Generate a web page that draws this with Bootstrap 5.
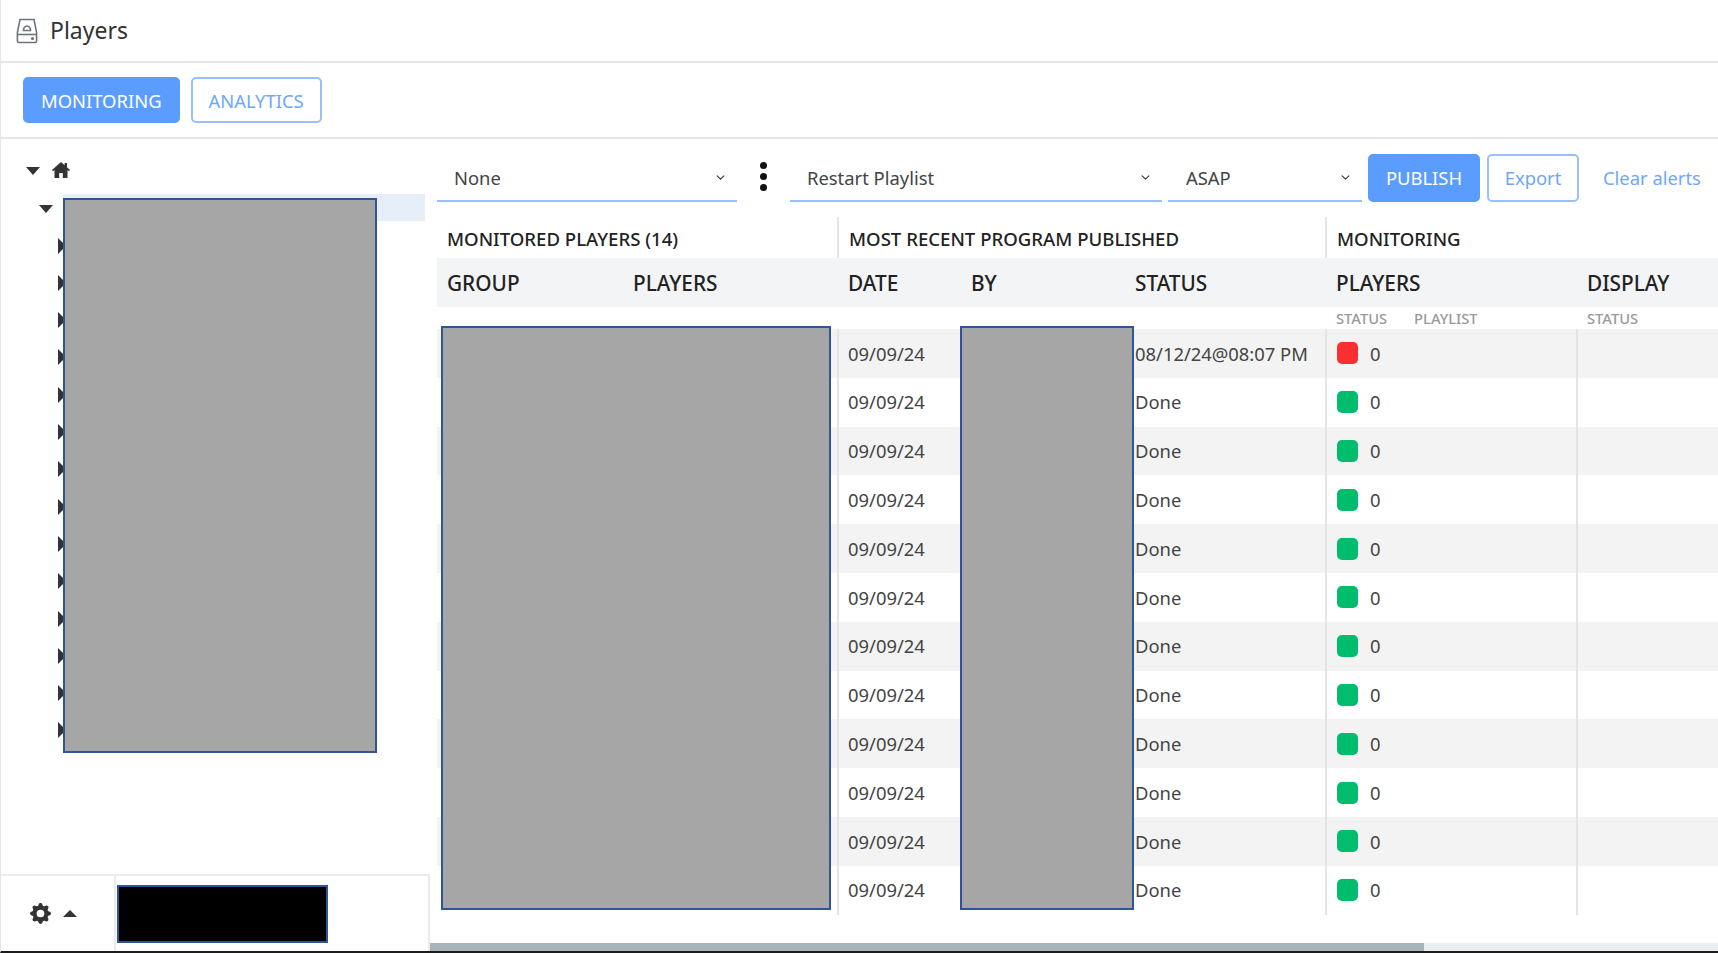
<!DOCTYPE html>
<html lang="en">
<head>
<meta charset="utf-8">
<title>Players</title>
<link href="https://cdn.jsdelivr.net/npm/bootstrap@5.3.0/dist/css/bootstrap.min.css" rel="stylesheet">
<style>
html,body{height:953px;overflow:hidden;background:#fff}
body{font-family:"Noto Sans","Open Sans",sans-serif;color:#444;font-size:18.4px}
.app-shell{height:953px;border-left:1px solid #e4e6e8;border-bottom:2px solid #1c1c1c}
.title-bar{height:63px;padding-left:15px;border-bottom:2px solid #e6e6e6;gap:12px;color:#333;font-size:23px;flex:none}
.tab-bar{height:76px;padding:14px 0 0 22px;border-bottom:2px solid #e6e6e6;gap:11px;flex:none}
.act-btn{--bs-btn-border-radius:5px;font-size:18.4px;height:47px;padding:0 17px;display:flex;align-items:center}
.tab-btn{height:46px;padding:2px 16px 0}
.act-solid{background:#5b9dff;border:2px solid #5b9dff;color:#fff}
.act-line{background:#fff;border:2px solid #98c0fb;color:#6ea8fe}
.work-area{min-height:0}
.side-col{width:429px;flex:none}
.tree-area{padding-top:13px;min-height:0}
.tree-row{height:37.3px;position:relative}
.tri-down{position:absolute;width:0;height:0;border-left:7px solid transparent;border-right:7px solid transparent;border-top:8px solid #333;top:15px}
.tri-second{left:38px;top:16px}
.tri-right{position:absolute;left:57px;top:11px;width:0;height:0;border-top:8px solid transparent;border-bottom:8px solid transparent;border-left:8px solid #333}
.tree-sel{position:absolute;left:62px;width:362px;top:5px;height:27px;background:#e6eef7}
.tree-home{position:absolute;left:51px;top:10px}
.mask-gray{position:absolute;background:#a6a6a6;border:2px solid #2f5597}
.mask-tree{left:62px;top:59px;width:314px;height:555px}
.side-foot{height:77px;flex:none;border-top:2px solid #e9ecef;border-right:2px solid #e9ecef}
.foot-tools{width:115px;border-right:2px solid #e9ecef;padding-left:29px;gap:12px}
.tri-up{width:0;height:0;border-left:7px solid transparent;border-right:7px solid transparent;border-bottom:7px solid #333}
.mask-black{width:211px;height:58px;background:#000;border:2px solid #2f5597;margin:9px 0 0 1px}
.main-col{min-width:0}
.tool-row{padding:15px 0 0 7px;height:78px;flex:none}
.pick-box{border:0;border-bottom:2px solid #98c0fb;border-radius:0;height:48px;font-size:18.4px;color:#444;padding:7px 36px 5px 17px;background-size:11px 9px;background-position:right 11px center;box-shadow:none}
.pick-a{width:300px}
.pick-b{width:372px;margin-left:53px}
.pick-c{width:194px;margin-left:6px;padding-left:18px}
.dots-col{width:0;position:relative}
.dots-mark{position:absolute;left:23px;top:8px;width:7px;display:flex;flex-direction:column;gap:4px}
.dots-mark span{width:7px;height:7px;border-radius:50%;background:#111}
.act-pub{margin-left:6px;width:112px;justify-content:center;height:48px}
.act-exp{margin-left:7px;width:92px;justify-content:center;height:48px}
.clear-link{margin-left:24px;color:#6ea8fe;text-decoration:none;white-space:nowrap;height:48px;display:flex;align-items:center}
.grid-wrap{position:relative;flex:1;min-height:0;overflow:hidden;padding-left:7px}
.mon-table{table-layout:fixed;width:1281px;margin:0;--bs-table-bg:transparent;border-collapse:collapse}
.mon-table td,.mon-table th{padding:0 0 0 10px;border:0;white-space:nowrap;vertical-align:middle;box-shadow:none}
.mon-table tr.sec-row th{height:41px;font-weight:500;font-size:18.6px;color:#222;padding-top:3px}
.mon-table tr.head-row th{height:49px;font-weight:500;font-size:20.8px;color:#222;background:#f3f4f6;padding-top:3px}
.mon-table tr.sub-row th{height:21px;font-weight:500;font-size:14.7px;color:#999;vertical-align:top;padding-top:0}
.mon-table tbody tr{height:48.8px}
.mon-table tbody td{color:#444;font-size:18.4px}
.mon-table tbody td.edge-l:nth-child(3){padding-left:9px}
.mon-table tbody tr:nth-child(odd) td{background:#f3f3f3}
.edge-l{border-left:2px solid #e4e4e4!important}
.mon-table tr.head-row th.edge-l{border-left:0!important}
.mon-table tr.sub-row th.edge-l{border-left:0!important}
.sq-st{width:21px;height:22px;border-radius:5px;display:inline-block;flex:none}
.sq-ok{background:#00bd6e}
.sq-bad{background:#fc2f30}
.st-cell{gap:12px}
.sub-gap{gap:27px}
.mask-a{left:11px;top:109px;width:390px;height:584px}
.mask-b{left:530px;top:109px;width:174px;height:584px}
.scroll-track{height:8px;flex:none;background:#e9eef2}
.scroll-thumb{width:994px;height:100%;background:#a8b4bb}
</style>
</head>
<body>
<div class="app-shell d-flex flex-column">
  <div class="title-bar d-flex align-items-center">
    <svg width="22" height="26" viewBox="0 0 22 26" fill="none" stroke="#6c757d" stroke-width="1.6"><path d="M4 1.5h14l2.6 13v8.5a1.5 1.5 0 0 1-1.5 1.5H2.9a1.5 1.5 0 0 1-1.5-1.5v-8.5z"/><path d="M1.4 16.5h19.2"/><path d="M7.5 12.5c-.3-2.600 1.700-4.500 3.500-4.500s3.800 1.900 3.500 4.500z"/><circle cx="16.500" cy="20.500" r=".8" fill="#6c757d"/></svg>
    <span>Players</span>
  </div>
  <div class="tab-bar d-flex align-items-start">
    <button type="button" class="btn act-btn tab-btn act-solid">MONITORING</button>
    <button type="button" class="btn act-btn tab-btn act-line">ANALYTICS</button>
  </div>
  <div class="work-area d-flex flex-grow-1">
    <aside class="side-col d-flex flex-column">
      <div class="tree-area flex-grow-1 position-relative">
        <div class="tree-row"><span class="tri-down" style="left:25px"></span>
          <svg class="tree-home" width="18" height="16" viewBox="0 0 18 16" fill="#333"><path d="M9 0 0 8l1 1.200 1.500-1.300V16h4.700v-5h3.600v5h4.700V7.900L17 9.200 18 8l-3-2.700V1h-2.400v2.200z"/></svg>
        </div>
        <div class="tree-row"><span class="tree-sel"></span><span class="tri-down tri-second"></span></div>
        <div class="tree-row"><span class="tri-right"></span></div>
        <div class="tree-row"><span class="tri-right"></span></div>
        <div class="tree-row"><span class="tri-right"></span></div>
        <div class="tree-row"><span class="tri-right"></span></div>
        <div class="tree-row"><span class="tri-right"></span></div>
        <div class="tree-row"><span class="tri-right"></span></div>
        <div class="tree-row"><span class="tri-right"></span></div>
        <div class="tree-row"><span class="tri-right"></span></div>
        <div class="tree-row"><span class="tri-right"></span></div>
        <div class="tree-row"><span class="tri-right"></span></div>
        <div class="tree-row"><span class="tri-right"></span></div>
        <div class="tree-row"><span class="tri-right"></span></div>
        <div class="tree-row"><span class="tri-right"></span></div>
        <div class="tree-row"><span class="tri-right"></span></div>
        <div class="mask-gray mask-tree"></div>
      </div>
      <div class="side-foot d-flex">
        <div class="foot-tools d-flex align-items-center">
          <svg width="21" height="21" viewBox="0 0 16 16" fill="#333"><path d="M9.405 1.050c-.413-1.400-2.397-1.400-2.810 0l-.1.340a1.464 1.464 0 0 1-2.105.872l-.31-.17c-1.283-.698-2.686.705-1.987 1.987l.169.311c.446.820.023 1.841-.872 2.105l-.34.1c-1.400.413-1.400 2.397 0 2.810l.34.1a1.464 1.464 0 0 1 .872 2.105l-.17.31c-.698 1.283.705 2.686 1.987 1.987l.311-.169a1.464 1.464 0 0 1 2.105.872l.1.340c.413 1.400 2.397 1.400 2.810 0l.1-.34a1.464 1.464 0 0 1 2.105-.872l.31.170c1.283.698 2.686-.705 1.987-1.987l-.169-.311a1.464 1.464 0 0 1 .872-2.105l.34-.1c1.400-.413 1.400-2.397 0-2.810l-.34-.1a1.464 1.464 0 0 1-.872-2.105l.17-.31c.698-1.283-.705-2.686-1.987-1.987l-.311.169a1.464 1.464 0 0 1-2.105-.872l-.1-.34zM8 10.930a2.929 2.929 0 1 1 0-5.860 2.929 2.929 0 0 1 0 5.858z"/></svg>
          <span class="tri-up"></span>
        </div>
        <div class="mask-black"></div>
      </div>
    </aside>
    <main class="main-col d-flex flex-column flex-grow-1">
      <div class="tool-row d-flex align-items-start">
        <select class="form-select pick-box pick-a"><option>None</option></select>
        <div class="dots-col"><div class="dots-mark"><span></span><span></span><span></span></div></div>
        <select class="form-select pick-box pick-b"><option>Restart Playlist</option></select>
        <select class="form-select pick-box pick-c"><option>ASAP</option></select>
        <button type="button" class="btn act-btn act-solid act-pub">PUBLISH</button>
        <button type="button" class="btn act-btn act-line act-exp">Export</button>
        <a href="#" class="clear-link">Clear alerts</a>
      </div>
      <div class="grid-wrap">
        <table class="table mon-table">
          <colgroup><col style="width:186px"><col style="width:215px"><col style="width:123px"><col style="width:164px"><col style="width:201px"><col style="width:251px"><col style="width:141px"></colgroup>
          <thead>
            <tr class="sec-row"><th colspan="2">MONITORED PLAYERS (14)</th><th colspan="3" class="edge-l">MOST RECENT PROGRAM PUBLISHED</th><th colspan="2" class="edge-l">MONITORING</th></tr>
            <tr class="head-row"><th>GROUP</th><th>PLAYERS</th><th class="edge-l">DATE</th><th>BY</th><th>STATUS</th><th class="edge-l">PLAYERS</th><th class="edge-l">DISPLAY</th></tr>
            <tr class="sub-row"><th></th><th></th><th></th><th></th><th></th><th><div class="d-flex sub-gap"><span>STATUS</span><span>PLAYLIST</span></div></th><th>STATUS</th></tr>
          </thead>
          <tbody>
            <tr><td></td><td></td><td class="edge-l">09/09/24</td><td></td><td>08/12/24@08:07 PM</td><td class="edge-l"><div class="d-flex align-items-center st-cell"><span class="sq-st sq-bad"></span>0</div></td><td class="edge-l"></td></tr>
            <tr><td></td><td></td><td class="edge-l">09/09/24</td><td></td><td>Done</td><td class="edge-l"><div class="d-flex align-items-center st-cell"><span class="sq-st sq-ok"></span>0</div></td><td class="edge-l"></td></tr>
            <tr><td></td><td></td><td class="edge-l">09/09/24</td><td></td><td>Done</td><td class="edge-l"><div class="d-flex align-items-center st-cell"><span class="sq-st sq-ok"></span>0</div></td><td class="edge-l"></td></tr>
            <tr><td></td><td></td><td class="edge-l">09/09/24</td><td></td><td>Done</td><td class="edge-l"><div class="d-flex align-items-center st-cell"><span class="sq-st sq-ok"></span>0</div></td><td class="edge-l"></td></tr>
            <tr><td></td><td></td><td class="edge-l">09/09/24</td><td></td><td>Done</td><td class="edge-l"><div class="d-flex align-items-center st-cell"><span class="sq-st sq-ok"></span>0</div></td><td class="edge-l"></td></tr>
            <tr><td></td><td></td><td class="edge-l">09/09/24</td><td></td><td>Done</td><td class="edge-l"><div class="d-flex align-items-center st-cell"><span class="sq-st sq-ok"></span>0</div></td><td class="edge-l"></td></tr>
            <tr><td></td><td></td><td class="edge-l">09/09/24</td><td></td><td>Done</td><td class="edge-l"><div class="d-flex align-items-center st-cell"><span class="sq-st sq-ok"></span>0</div></td><td class="edge-l"></td></tr>
            <tr><td></td><td></td><td class="edge-l">09/09/24</td><td></td><td>Done</td><td class="edge-l"><div class="d-flex align-items-center st-cell"><span class="sq-st sq-ok"></span>0</div></td><td class="edge-l"></td></tr>
            <tr><td></td><td></td><td class="edge-l">09/09/24</td><td></td><td>Done</td><td class="edge-l"><div class="d-flex align-items-center st-cell"><span class="sq-st sq-ok"></span>0</div></td><td class="edge-l"></td></tr>
            <tr><td></td><td></td><td class="edge-l">09/09/24</td><td></td><td>Done</td><td class="edge-l"><div class="d-flex align-items-center st-cell"><span class="sq-st sq-ok"></span>0</div></td><td class="edge-l"></td></tr>
            <tr><td></td><td></td><td class="edge-l">09/09/24</td><td></td><td>Done</td><td class="edge-l"><div class="d-flex align-items-center st-cell"><span class="sq-st sq-ok"></span>0</div></td><td class="edge-l"></td></tr>
            <tr><td></td><td></td><td class="edge-l">09/09/24</td><td></td><td>Done</td><td class="edge-l"><div class="d-flex align-items-center st-cell"><span class="sq-st sq-ok"></span>0</div></td><td class="edge-l"></td></tr>
          </tbody>
        </table>
        <div class="mask-gray mask-a"></div>
        <div class="mask-gray mask-b"></div>
      </div>
      <div class="scroll-track"><div class="scroll-thumb"></div></div>
    </main>
  </div>
</div>
</body>
</html>
